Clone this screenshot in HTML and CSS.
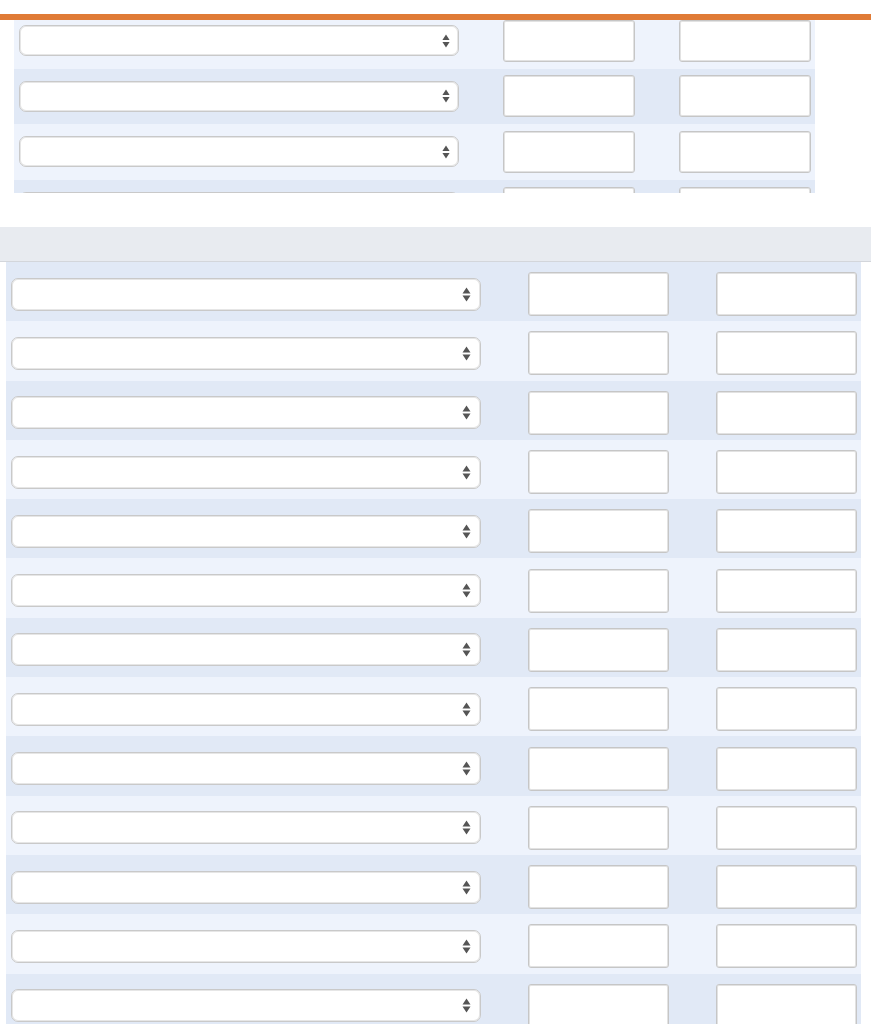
FILE: index.html
```html
<!DOCTYPE html>
<html>
<head>
<meta charset="utf-8">
<link rel="stylesheet" href="styles.css">
</head>
<body>
<div class="top">
  <div class="bar"></div>
  <div class="clip">
    <div class="table small">
      <div class="row light"><div class="sel"><svg class="arr" width="8" height="14" viewBox="0 0 8 14"><path d="M4 0.5L7.6 6H0.4Z M4 13.5L7.6 8H0.4Z" fill="#555"/></svg></div><div class="inp"></div><div class="inp"></div></div>
      <div class="row dark"><div class="sel"><svg class="arr" width="8" height="14" viewBox="0 0 8 14"><path d="M4 0.5L7.6 6H0.4Z M4 13.5L7.6 8H0.4Z" fill="#555"/></svg></div><div class="inp"></div><div class="inp"></div></div>
      <div class="row light"><div class="sel"><svg class="arr" width="8" height="14" viewBox="0 0 8 14"><path d="M4 0.5L7.6 6H0.4Z M4 13.5L7.6 8H0.4Z" fill="#555"/></svg></div><div class="inp"></div><div class="inp"></div></div>
      <div class="row dark"><div class="sel"><svg class="arr" width="8" height="14" viewBox="0 0 8 14"><path d="M4 0.5L7.6 6H0.4Z M4 13.5L7.6 8H0.4Z" fill="#555"/></svg></div><div class="inp"></div><div class="inp"></div></div>
    </div>
  </div>
</div>
<div class="header"></div>
<div class="table big">
  <div class="row dark"><div class="sel"><svg class="arr" width="9" height="15" viewBox="0 0 9 15"><path d="M4.5 0.5L8.5 6.5H0.5Z M4.5 14.5L8.5 8.5H0.5Z" fill="#555"/></svg></div><div class="inp"></div><div class="inp"></div></div>
  <div class="row light"><div class="sel"><svg class="arr" width="9" height="15" viewBox="0 0 9 15"><path d="M4.5 0.5L8.5 6.5H0.5Z M4.5 14.5L8.5 8.5H0.5Z" fill="#555"/></svg></div><div class="inp"></div><div class="inp"></div></div>
  <div class="row dark"><div class="sel"><svg class="arr" width="9" height="15" viewBox="0 0 9 15"><path d="M4.5 0.5L8.5 6.5H0.5Z M4.5 14.5L8.5 8.5H0.5Z" fill="#555"/></svg></div><div class="inp"></div><div class="inp"></div></div>
  <div class="row light"><div class="sel"><svg class="arr" width="9" height="15" viewBox="0 0 9 15"><path d="M4.5 0.5L8.5 6.5H0.5Z M4.5 14.5L8.5 8.5H0.5Z" fill="#555"/></svg></div><div class="inp"></div><div class="inp"></div></div>
  <div class="row dark"><div class="sel"><svg class="arr" width="9" height="15" viewBox="0 0 9 15"><path d="M4.5 0.5L8.5 6.5H0.5Z M4.5 14.5L8.5 8.5H0.5Z" fill="#555"/></svg></div><div class="inp"></div><div class="inp"></div></div>
  <div class="row light"><div class="sel"><svg class="arr" width="9" height="15" viewBox="0 0 9 15"><path d="M4.5 0.5L8.5 6.5H0.5Z M4.5 14.5L8.5 8.5H0.5Z" fill="#555"/></svg></div><div class="inp"></div><div class="inp"></div></div>
  <div class="row dark"><div class="sel"><svg class="arr" width="9" height="15" viewBox="0 0 9 15"><path d="M4.5 0.5L8.5 6.5H0.5Z M4.5 14.5L8.5 8.5H0.5Z" fill="#555"/></svg></div><div class="inp"></div><div class="inp"></div></div>
  <div class="row light"><div class="sel"><svg class="arr" width="9" height="15" viewBox="0 0 9 15"><path d="M4.5 0.5L8.5 6.5H0.5Z M4.5 14.5L8.5 8.5H0.5Z" fill="#555"/></svg></div><div class="inp"></div><div class="inp"></div></div>
  <div class="row dark"><div class="sel"><svg class="arr" width="9" height="15" viewBox="0 0 9 15"><path d="M4.5 0.5L8.5 6.5H0.5Z M4.5 14.5L8.5 8.5H0.5Z" fill="#555"/></svg></div><div class="inp"></div><div class="inp"></div></div>
  <div class="row light"><div class="sel"><svg class="arr" width="9" height="15" viewBox="0 0 9 15"><path d="M4.5 0.5L8.5 6.5H0.5Z M4.5 14.5L8.5 8.5H0.5Z" fill="#555"/></svg></div><div class="inp"></div><div class="inp"></div></div>
  <div class="row dark"><div class="sel"><svg class="arr" width="9" height="15" viewBox="0 0 9 15"><path d="M4.5 0.5L8.5 6.5H0.5Z M4.5 14.5L8.5 8.5H0.5Z" fill="#555"/></svg></div><div class="inp"></div><div class="inp"></div></div>
  <div class="row light"><div class="sel"><svg class="arr" width="9" height="15" viewBox="0 0 9 15"><path d="M4.5 0.5L8.5 6.5H0.5Z M4.5 14.5L8.5 8.5H0.5Z" fill="#555"/></svg></div><div class="inp"></div><div class="inp"></div></div>
  <div class="row dark"><div class="sel"><svg class="arr" width="9" height="15" viewBox="0 0 9 15"><path d="M4.5 0.5L8.5 6.5H0.5Z M4.5 14.5L8.5 8.5H0.5Z" fill="#555"/></svg></div><div class="inp"></div><div class="inp"></div></div>
</div>
</body>
</html>
```

FILE: styles.css
```css
html, body {
  margin: 0;
  padding: 0;
  background: #ffffff;
  font-family: "Liberation Sans", Arial, sans-serif;
  overflow: hidden;
}

.top {
  padding-top: 14px;
}

.bar {
  height: 6px;
  background: #e07b36;
}

.clip {
  margin-left: 14px;
  width: 801px;
  height: 173px;
  overflow: hidden;
}

.table {
  display: flex;
  flex-direction: column;
}

.small {
  margin-top: -7px;
}

.row {
  display: flex;
  align-items: center;
  box-sizing: border-box;
}

.light { background: #eef3fc; }
.dark { background: #e1e9f6; }

.sel {
  box-sizing: border-box;
  background: #ffffff;
  border: 1px solid #c9c9c9;
  box-shadow: inset 0 0 0 1px #e6e6e6;
  border-radius: 7px;
  display: flex;
  align-items: center;
  justify-content: flex-end;
}

.inp {
  box-sizing: border-box;
  background: #ffffff;
  border: 1px solid #c6c6c6;
  box-shadow: inset 0 0 0 1px #e2e2e2;
  border-radius: 3px;
}

/* top (smaller) table */
.small .row {
  height: 55.6px;
  padding-left: 5px;
  gap: 44px;
}
.small .sel {
  width: 440px;
  height: 31px;
  padding-right: 8px;
}
.small .inp {
  width: 132px;
  height: 42px;
}

.header {
  margin-top: 34px;
  height: 34px;
  background: #e8ebf0;
  border-bottom: 1px solid #d3d6db;
}

/* bottom (larger) table */
.big {
  margin-left: 6px;
  width: 855px;
}
.big .row {
  height: 59.3px;
  padding-left: 5px;
  padding-top: 5px;
  gap: 47px;
}
.big .sel {
  width: 470px;
  height: 33px;
  padding-right: 9px;
}
.big .inp {
  width: 141px;
  height: 44px;
}
```
